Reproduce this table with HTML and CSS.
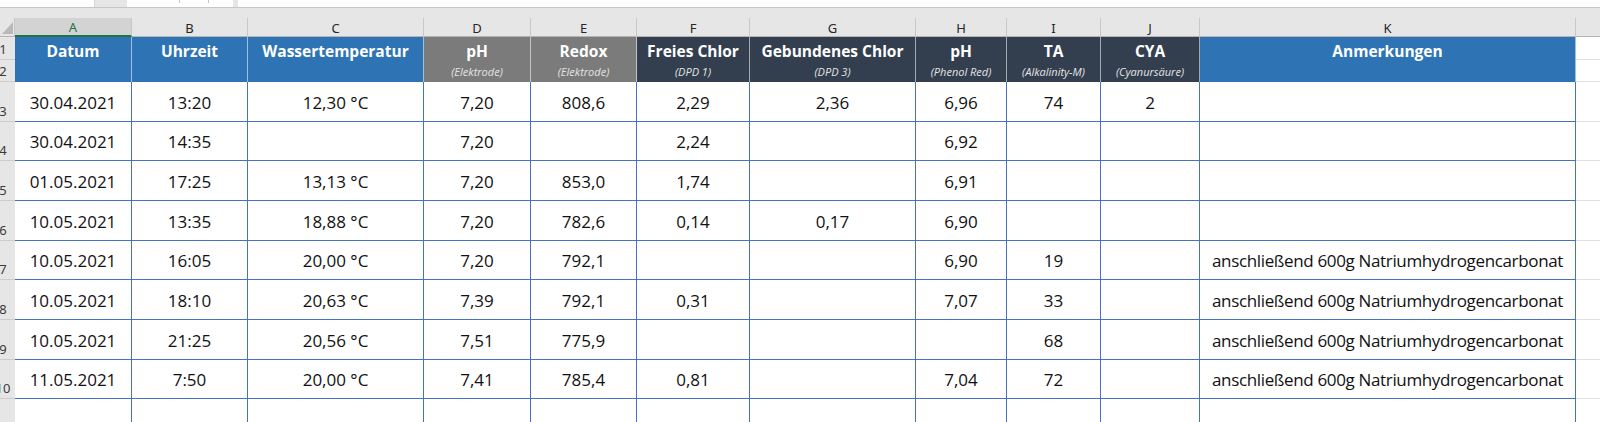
FILE: index.html
```html
<!DOCTYPE html>
<html lang="de">
<head>
<meta charset="utf-8">
<title>Pool Messwerte</title>
<link rel="stylesheet" href="styles.css">
</head>
<body>
<div class="excel">
  <div class="ribbon">
    <div class="namebox"></div>
    <div class="fxarea"><span class="mark"></span><span class="mark"></span></div>
    <div class="formula"></div>
  </div>
  <div class="sheet">
    <div class="corner"><svg width="15" height="19" viewBox="0 0 15 19"><polygon points="13,4 13,16 2,16" fill="#b9b9b9"/></svg></div>
    <div class="ch sel">A</div>
    <div class="ch">B</div>
    <div class="ch">C</div>
    <div class="ch">D</div>
    <div class="ch">E</div>
    <div class="ch">F</div>
    <div class="ch">G</div>
    <div class="ch">H</div>
    <div class="ch">I</div>
    <div class="ch">J</div>
    <div class="ch">K</div>
    <div class="ch last"></div>

    <div class="rh"><span>1</span></div>
    <div class="hc blue"><span class="t">Datum</span></div>
    <div class="hc blue"><span class="t">Uhrzeit</span></div>
    <div class="hc blue"><span class="t">Wassertemperatur</span></div>
    <div class="hc grey"><span class="t">pH</span><span class="s">(Elektrode)</span></div>
    <div class="hc grey"><span class="t">Redox</span><span class="s">(Elektrode)</span></div>
    <div class="hc dark"><span class="t">Freies Chlor</span><span class="s">(DPD 1)</span></div>
    <div class="hc dark"><span class="t">Gebundenes Chlor</span><span class="s">(DPD 3)</span></div>
    <div class="hc dark"><span class="t">pH</span><span class="s">(Phenol Red)</span></div>
    <div class="hc dark"><span class="t">TA</span><span class="s">(Alkalinity-M)</span></div>
    <div class="hc dark"><span class="t">CYA</span><span class="s">(Cyanursäure)</span></div>
    <div class="hc blue"><span class="t">Anmerkungen</span></div>
    <div class="lc"></div>
    <div class="rh"><span>2</span></div>
    <div class="lc"></div>

    <div class="rh"><span>3</span></div>
    <div class="c">30.04.2021</div><div class="c">13:20</div><div class="c">12,30 °C</div><div class="c">7,20</div><div class="c">808,6</div><div class="c">2,29</div><div class="c">2,36</div><div class="c">6,96</div><div class="c">74</div><div class="c">2</div><div class="c"></div><div class="lc"></div>

    <div class="rh"><span>4</span></div>
    <div class="c">30.04.2021</div><div class="c">14:35</div><div class="c"></div><div class="c">7,20</div><div class="c"></div><div class="c">2,24</div><div class="c"></div><div class="c">6,92</div><div class="c"></div><div class="c"></div><div class="c"></div><div class="lc"></div>

    <div class="rh"><span>5</span></div>
    <div class="c">01.05.2021</div><div class="c">17:25</div><div class="c">13,13 °C</div><div class="c">7,20</div><div class="c">853,0</div><div class="c">1,74</div><div class="c"></div><div class="c">6,91</div><div class="c"></div><div class="c"></div><div class="c"></div><div class="lc"></div>

    <div class="rh"><span>6</span></div>
    <div class="c">10.05.2021</div><div class="c">13:35</div><div class="c">18,88 °C</div><div class="c">7,20</div><div class="c">782,6</div><div class="c">0,14</div><div class="c">0,17</div><div class="c">6,90</div><div class="c"></div><div class="c"></div><div class="c"></div><div class="lc"></div>

    <div class="rh"><span>7</span></div>
    <div class="c">10.05.2021</div><div class="c">16:05</div><div class="c">20,00 °C</div><div class="c">7,20</div><div class="c">792,1</div><div class="c"></div><div class="c"></div><div class="c">6,90</div><div class="c">19</div><div class="c"></div><div class="c note">anschließend 600g Natriumhydrogencarbonat</div><div class="lc"></div>

    <div class="rh"><span>8</span></div>
    <div class="c">10.05.2021</div><div class="c">18:10</div><div class="c">20,63 °C</div><div class="c">7,39</div><div class="c">792,1</div><div class="c">0,31</div><div class="c"></div><div class="c">7,07</div><div class="c">33</div><div class="c"></div><div class="c note">anschließend 600g Natriumhydrogencarbonat</div><div class="lc"></div>

    <div class="rh"><span>9</span></div>
    <div class="c">10.05.2021</div><div class="c">21:25</div><div class="c">20,56 °C</div><div class="c">7,51</div><div class="c">775,9</div><div class="c"></div><div class="c"></div><div class="c"></div><div class="c">68</div><div class="c"></div><div class="c note">anschließend 600g Natriumhydrogencarbonat</div><div class="lc"></div>

    <div class="rh"><span>10</span></div>
    <div class="c">11.05.2021</div><div class="c">7:50</div><div class="c">20,00 °C</div><div class="c">7,41</div><div class="c">785,4</div><div class="c">0,81</div><div class="c"></div><div class="c">7,04</div><div class="c">72</div><div class="c"></div><div class="c note">anschließend 600g Natriumhydrogencarbonat</div><div class="lc"></div>

    <div class="rh"></div>
    <div class="c"></div><div class="c"></div><div class="c"></div><div class="c"></div><div class="c"></div><div class="c"></div><div class="c"></div><div class="c"></div><div class="c"></div><div class="c"></div><div class="c"></div><div class="lc"></div>
  </div>
</div>
</body>
</html>
```

FILE: styles.css
```css
html, body {
  margin: 0;
  padding: 0;
}
body {
  width: 1600px;
  height: 422px;
  overflow: hidden;
  background: #e6e6e6;
  font-family: "Open Sans", "Liberation Sans", sans-serif;
}
.excel {
  display: flex;
  flex-direction: column;
}
.ribbon {
  display: flex;
  height: 7px;
  border-bottom: 1px solid #c6c6c6;
  margin-bottom: 10px;
}
.namebox {
  width: 94px;
  background: #fff;
  border-right: 1px solid #d6d6d6;
}
.fxarea {
  width: 106px;
  margin-left: 32px;
  background: #fff;
  display: flex;
  gap: 28px;
  padding-left: 52px;
  box-sizing: border-box;
}
.mark {
  width: 1px;
  height: 3px;
  background: #c4c4c4;
}
.formula {
  flex: 1;
  margin-left: 5px;
  background: #fff;
}
.sheet {
  display: grid;
  grid-template-columns: 15px 117px 116px 176px 107px 106px 113px 166px 91px 94px 99px 376px 1fr;
  grid-template-rows: 19px 23px 22px 40px 39px 40px 40px 39px 40px 40px 39px 40px;
  background: #fff;
}
.sheet > div {
  box-sizing: border-box;
}
.corner {
  background: #e6e6e6;
  border-bottom: 1px solid #b4b4b4;
  border-right: 1px solid #c8c8c8;
}
.corner svg {
  display: block;
}
.ch {
  background: #e6e6e6;
  border-right: 1px solid #c8c8c8;
  border-bottom: 1px solid #b4b4b4;
  display: flex;
  align-items: center;
  justify-content: center;
  font: 13px "Noto Sans", "Open Sans", sans-serif;
  color: #262626;
  padding-top: 1px;
}
.ch.sel {
  background: #d3d3d3;
  color: #217346;
  border-bottom: 2px solid #217346;
}
.ch.last {
  border-right: none;
}
.rh {
  background: #e6e6e6;
  border-bottom: 1px solid #cdcdcd;
  display: flex;
  align-items: flex-end;
  overflow: hidden;
  padding-bottom: 3px;
}
.rh span {
  flex: none;
  width: 32px;
  margin-left: -13px;
  text-align: center;
  font: 13px/1 "Noto Sans", "Open Sans", sans-serif;
  color: #3a3a3a;
}
.hc {
  grid-row: span 2;
  display: flex;
  flex-direction: column;
  align-items: center;
  padding-top: 3px;
  color: #fff;
  border-right: 1px solid rgba(255, 255, 255, 0.55);
  white-space: nowrap;
}
.hc.blue {
  background: #2e74b5;
}
.hc.grey {
  background: #7b7b7b;
}
.hc.dark {
  background: #333f4f;
}
.t {
  font-weight: 700;
  font-size: 15.5px;
  line-height: 22px;
}
.s {
  font-style: italic;
  font-size: 11px;
  line-height: 20px;
  color: #e4e4e4;
}
.c {
  border-right: 1px solid #4472c4;
  border-bottom: 1px solid #4472c4;
  display: flex;
  align-items: center;
  justify-content: center;
  padding-top: 1px;
  font-size: 17px;
  color: #111;
  white-space: nowrap;
}
.c.note {
  letter-spacing: -0.35px;
}
.lc {
  background: #fff;
  border-bottom: 1px solid #e0e0e0;
}
```
